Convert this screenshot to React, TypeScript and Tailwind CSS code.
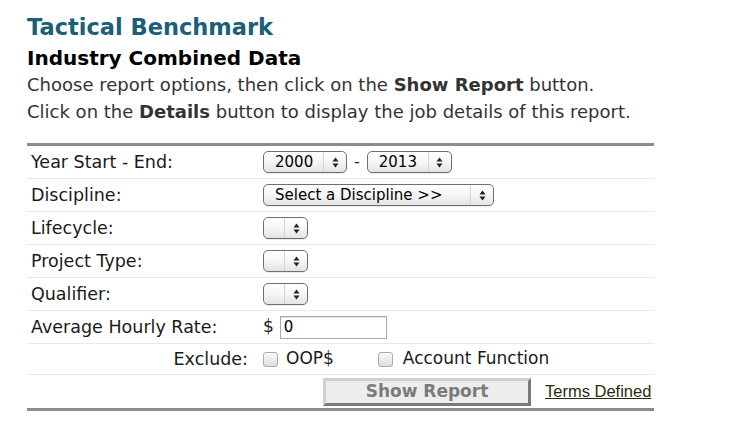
import React from "react";

/* ── Mac-style select, drawn by hand ── */

function Arrows() {
  return (
    <svg width="7" height="11" viewBox="0 0 7 11" className="block">
      <path d="M3.5 0.5 L6.5 4.5 L0.5 4.5 Z" fill="#222" />
      <path d="M3.5 10.5 L6.5 6.5 L0.5 6.5 Z" fill="#222" />
    </svg>
  );
}

function Select({ value, width }: { value?: string; width: string }) {
  return (
    <div
      className={`${width} h-[22px] flex items-stretch rounded-[5px] border border-[#6f6f6f] bg-gradient-to-b from-white via-[#f6f6f6] to-[#e4e4e4] shadow-[0_1px_0_rgba(0,0,0,0.08)]`}
    >
      <div className="flex-1 flex items-center pl-[11px] text-[15px] text-black leading-none">
        {value}
      </div>
      <div className="w-[23px] border-l border-[#d4d4d4] flex items-center justify-center">
        <Arrows />
      </div>
    </div>
  );
}

function Checkbox() {
  return (
    <div className="w-[15px] h-[15px] rounded-[3px] border border-[#a8a8a8] bg-gradient-to-b from-[#fafafa] to-[#dedede]" />
  );
}

function Row({
  label,
  children,
}: {
  label?: string;
  children: React.ReactNode;
}) {
  return (
    <div className="flex items-center h-[33px] border-b border-[#e9e9e9]">
      <div className="w-[236px] pl-[4px] text-[17.5px] text-[#1a1a1a] leading-none pt-[1px]">
        {label}
      </div>
      <div className="flex items-center">{children}</div>
    </div>
  );
}

export default function App() {
  return (
    <div
      className="w-[749px] h-[424px] bg-white pl-[27px] pt-[12px]"
      style={{ fontFamily: '"DejaVu Sans", Verdana, sans-serif' }}
    >
      <h1 className="text-[22.5px] font-bold text-[#1b5f79] leading-[30px]">
        Tactical Benchmark
      </h1>
      <h2 className="text-[20px] font-bold text-black leading-[26px] mt-[3px]">
        Industry Combined Data
      </h2>
      <p className="text-[18px] text-[#333] leading-[27px]">
        Choose report options, then click on the <b>Show Report</b> button.
      </p>
      <p className="text-[18px] text-[#333] leading-[27px]">
        Click on the <b>Details</b> button to display the job details of this
        report.
      </p>

      {/* Options table */}
      <div className="w-[627px] mt-[18px] border-t-[3px] border-b-[3px] border-[#8c8c8c]">
        <Row label="Year Start - End:">
          <Select value="2000" width="w-[84px]" />
          <span className="mx-[7px] text-[16px] text-[#222]">-</span>
          <Select value="2013" width="w-[85px]" />
        </Row>
        <Row label="Discipline:">
          <Select value="Select a Discipline >>" width="w-[231px]" />
        </Row>
        <Row label="Lifecycle:">
          <Select width="w-[45px]" />
        </Row>
        <Row label="Project Type:">
          <Select width="w-[45px]" />
        </Row>
        <Row label="Qualifier:">
          <Select width="w-[45px]" />
        </Row>
        <Row label="Average Hourly Rate:">
          <span className="text-[17px] text-[#222] mr-[6px]">$</span>
          <div className="w-[107px] h-[23px] border border-[#a9a9a9] bg-white flex items-center pl-[3px] text-[15px] text-black shadow-[inset_0_1px_1px_rgba(0,0,0,0.12)]">
            0
          </div>
        </Row>
        <div className="flex items-center h-[31px] border-b border-[#e9e9e9]">
          <div className="w-[236px] pr-[15px] text-right text-[17.5px] text-[#1a1a1a] leading-none pt-[1px]">
            Exclude:
          </div>
          <Checkbox />
          <span className="ml-[8px] text-[17px] text-[#1a1a1a]">OOP$</span>
          <div className="ml-[44px]">
            <Checkbox />
          </div>
          <span className="ml-[10px] text-[17px] text-[#1a1a1a]">
            Account Function
          </span>
        </div>
        <div className="flex items-center h-[33px]">
          <div className="w-[296px]" />
          <button className="w-[208px] h-[28px] bg-[#ededed] border-[3px] border-t-[#d0d0d0] border-l-[#d0d0d0] border-r-[#7a7a7a] border-b-[#7a7a7a] text-[17px] font-bold text-[#7b7b7b] leading-none">
            Show Report
          </button>
          <a
            href="#"
            className="ml-[14px] text-[16.5px] text-[#2b2a10] underline"
            style={{ fontFamily: '"Liberation Sans", Arial, sans-serif' }}
          >
            Terms Defined
          </a>
        </div>
      </div>
    </div>
  );
}
